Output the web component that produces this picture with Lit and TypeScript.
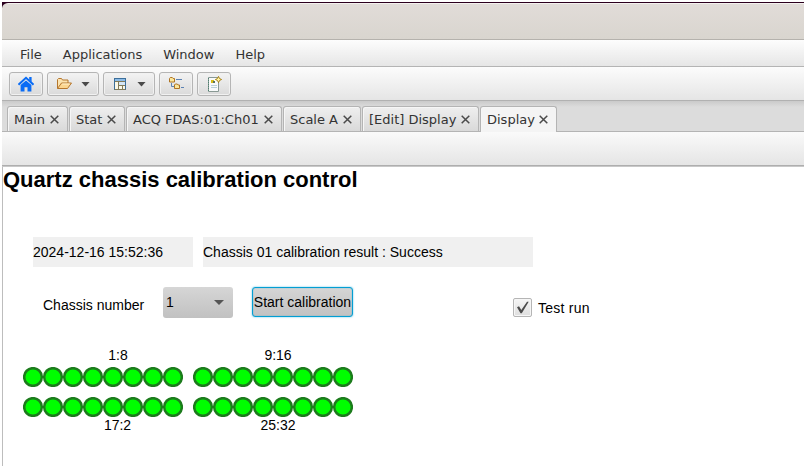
import { LitElement, html, css, svg } from "lit";
import { customElement, property } from "lit/decorators.js";
import { styleMap } from "lit/directives/style-map.js";
import { classMap } from "lit/directives/class-map.js";

const homeIcon = html`<svg width="16" height="16" viewBox="0 0 16 16">
  <path fill="#0a6cf5" d="M8 4.400 2.600 9v6.400h3.900v-4.200h3v4.200h3.900V9z"/>
  <path fill="none" stroke="#0a6cf5" stroke-width="1.900" d="M.5 8.700 8 1.700l7.500 7"/>
  <path fill="#0a6cf5" d="M11.200 1h2.400v5l-2.400-2.200z"/>
</svg>`;

const folderIcon = html`<svg width="16" height="16" viewBox="0 0 16 16">
  <path fill="#fbe3b0" stroke="#b5762d" d="M1.500 12.500v-9l1-1h3l1 1.500h5.500v3"/>
  <path fill="#fbd58f" stroke="#b5762d" stroke-linejoin="round" d="M1.500 12.500 5.500 7h10l-4 5.500z"/>
  <path fill="none" stroke="#fff1cf" d="M6.200 8h7.500"/>
</svg>`;

const layoutIcon = html`<svg width="16" height="16" viewBox="0 0 16 16">
  <rect x="2.500" y="2.500" width="11" height="11" fill="#fbf8e8" stroke="#3c6f9a"/>
  <rect x="7" y="6" width="6" height="3" fill="#d5e6f5"/>
  <rect x="3" y="3" width="10" height="2" fill="#8bbbe8"/>
  <path fill="none" stroke="#827b58" d="M3 5.500h10M6.500 5.500v8M6.500 9.500h7M10.500 9.500v4M2.500 13.500h11"/>
  <path fill="none" stroke="#3c6f9a" d="M2.500 13V2.500h11V13"/>
</svg>`;

const treeIcon = html`<svg width="16" height="16" viewBox="0 0 16 16">
  <path fill="none" stroke="#5c83b4" d="M8 3.500h6M13 11.500h3M3.500 7v3.500H6"/>
  <path fill="#fbe79c" stroke="#ae7424" d="M1.500 6V2.500l.8-1h2l.8 1h1.400V6zM6.500 12.500V9l.8-1h2l.8 1h1.400v3.500z"/>
</svg>`;

const newIcon = html`<svg width="16" height="16" viewBox="0 0 16 16">
  <path fill="#f8fafa" stroke="#899994" d="M2.500 1.500h10v14h-10z"/>
  <path fill="none" stroke="#4e8171" stroke-dasharray="1 1" d="M2.500 2v13"/>
  <path fill="none" stroke="#b9d0da" d="M5 9.500h6M5 11.500h6"/>
  <path fill="#d8bd16" d="M5 4h3v3H5z"/><path fill="#57705b" d="M7 5h2v2H7z"/>
  <path fill="#fff5a2" stroke="#a37a0b" stroke-width=".9" d="m12.500.4 1 2.100 2.100 1-2.100 1-1 2.100-1-2.100-2.100-1 2.100-1z"/>
</svg>`;

@customElement("menu-bar")
class MenuBar extends LitElement {
  static styles = css`
    :host { display: flex; box-sizing: border-box; height: 27px; padding-left: 18px; gap: 21px;
      background: linear-gradient(#fdfdfd, #e6e6e6); border-bottom: 1px solid #b4b4b4;
      font: 13px/30px "DejaVu Sans", sans-serif; color: #333; }
  `;
  render() {
    return ["File", "Applications", "Window", "Help"].map((m) => html`<span>${m}</span>`);
  }
}

@customElement("tool-bar")
class ToolBar extends LitElement {
  static styles = css`
    :host { display: flex; box-sizing: border-box; height: 34px; padding: 5px 0 0 7px; gap: 4px;
      background: linear-gradient(#fcfcfc, #e5e5e5); border-bottom: 1px solid #b1b1b1; }
    .btn { display: flex; align-items: center; box-sizing: border-box; width: 34px; height: 24px;
      padding-left: 8px; border: 1px solid #b5b5b5; border-radius: 3px;
      background: linear-gradient(#f3f3f3, #dadada); box-shadow: inset 0 0 0 1px #f1f1f1; }
    .wide { width: 52px; gap: 9px; }
    .arrow { width: 9px; height: 5px; background: #4a4a4a; clip-path: polygon(0 0, 100% 0, 50% 100%); }
  `;
  render() {
    const items = [
      { icon: homeIcon, menu: false }, { icon: folderIcon, menu: true },
      { icon: layoutIcon, menu: true }, { icon: treeIcon, menu: false }, { icon: newIcon, menu: false },
    ];
    return items.map((i) => html`<div class=${classMap({ btn: true, wide: i.menu })}>
      ${i.icon}${i.menu ? html`<span class="arrow"></span>` : ""}</div>`);
  }
}

@customElement("tab-strip")
class TabStrip extends LitElement {
  static styles = css`
    :host { display: flex; box-sizing: border-box; height: 31px; padding: 5px 0 0 5px; gap: 1px;
      background: linear-gradient(#cacaca, #dcdcdc 6px); border-bottom: 1px solid #b4b4b4;
      font: 13px/25px "DejaVu Sans", sans-serif; color: #333; }
    .tab { display: flex; align-items: center; justify-content: space-between; box-sizing: border-box;
      height: 25px; padding: 0 8px 0 6px; border: 1px solid #b4b4b4; border-bottom: 0;
      border-radius: 3px 3px 0 0; white-space: nowrap;
      background: linear-gradient(#efefef, #d9d9d9); box-shadow: inset 1px 1px #f6f6f6; }
    .active { height: 26px; padding-bottom: 1px; background: #f4f4f4; }
    svg { display: block; }
  `;
  render() {
    const tabs: [string, number][] = [["Main", 61], ["Stat", 56], ["ACQ FDAS:01:Ch01", 156],
      ["Scale A", 78], ["[Edit] Display", 117], ["Display", 77]];
    return tabs.map(([name, w], i) => html`<div class=${classMap({ tab: true, active: i === 5 })}
      style=${styleMap({ width: `${w}px` })}><span>${name}</span>
      <svg width="9.500" height="9" viewBox="0 0 9.500 9"><path d="M.7.7l7.600 7.600M8.300.7.7 8.300" stroke="#4a4a4a" stroke-width="1.500"/></svg>
    </div>`);
  }
}

@customElement("led-row")
class LedRow extends LitElement {
  @property({ type: Number }) count = 8;
  static styles = css`
    :host { display: flex; height: 20px; }
    svg { display: block; }
  `;
  render() {
    return html`<svg width=${this.count * 20} height="20">${Array.from({ length: this.count }, (_, i) =>
      svg`<circle cx=${i * 20 + 10} cy="10" r="8.850" fill="#00ff00" stroke="#1c7c1c" stroke-width="2.500"/>`)}</svg>`;
  }
}

@customElement("app-root")
class AppRoot extends LitElement {
  static styles = css`
    :host { display: block; box-sizing: border-box; width: 806px; height: 468px; padding: 2px; background: #fff; overflow: hidden; }
    .window { background: linear-gradient(#2c001e, #2c001e) 0 0 / 7px 7px no-repeat; }
    .title { box-sizing: border-box; height: 38px; border-top: 1px solid #2c001e;
      border-bottom: 1px solid #b5b2ad; border-radius: 6px 0 0 0;
      background: linear-gradient(#f4f1ef 0 1px, #e1dcd8 1px, #d9d5cf); background-clip: padding-box; }
    .sub { box-sizing: border-box; height: 35px; border-bottom: 1px solid #c8c8c8;
      background: linear-gradient(#fafafa, #e5e5e5 33px, #aeaeae 33px); }
    .canvas { box-sizing: border-box; height: 299px; border-left: 1px solid #bdbdbd; background: #fff;
      font: 14px/16px "Liberation Sans", Arial, sans-serif; color: #000; }
    h1 { margin: 0; height: 70px; font-size: 22px; line-height: 26px; white-space: nowrap; }
    .status { display: flex; gap: 10px; padding-left: 30px; line-height: 30px; }
    .field { background: #f0f0f0; height: 30px; width: 330px; }
    .date { width: 160px; }
    .controls { display: flex; height: 31px; padding: 20px 0 0 40px; }
    .label { width: 120px; line-height: 37px; }
    .combo { display: flex; align-items: center; justify-content: space-between; box-sizing: border-box;
      width: 70px; height: 31px; padding: 0 9px 0 3px; border-radius: 3px; line-height: 14px;
      background: linear-gradient(#d6d6d6, #c1c1c1); }
    .value { padding-bottom: 1px; }
    .arrow { width: 10px; height: 5px; background: #555; clip-path: polygon(0 0, 100% 0, 50% 100%); }
    .start { display: flex; justify-content: center; box-sizing: border-box; width: 101px; height: 30px;
      margin-left: 19px; border: 1px solid #039ed3; border-radius: 3px; line-height: 29px; white-space: nowrap;
      background: linear-gradient(#d5d5d5, #c2c2c2); box-shadow: 0 0 2px #5cc3e5, inset 0 0 1px #039ed3; }
    .check { display: flex; align-items: center; margin: 11px 0 0 160px; height: 19px; gap: 6px; white-space: nowrap; }
    .check span { letter-spacing: .25px; }
    .box { box-sizing: border-box; width: 19px; height: 19px; border: 1px solid #b5b5b5; border-radius: 2px;
      background: linear-gradient(#f5f5f5, #dedede); box-shadow: inset 0 0 0 1px #f6f6f6; }
    .box svg { display: block; }
    .banks { display: grid; grid-template-columns: 160px 160px; column-gap: 10px;
      padding: 29px 0 0 20px; text-align: center; }
    .bank { display: flex; flex-direction: column; }
    .top { height: 20px; padding-left: 10px; }
    .bank led-row + led-row { margin-top: 10px; }
    .bottom { padding-left: 10px; }
    .first .top { padding-left: 30px; }
    .first .bottom { padding-left: 29px; }
  `;
  render() {
    return html`
      <div class="window">
        <div class="title"></div>
        <menu-bar></menu-bar>
        <tool-bar></tool-bar>
        <tab-strip></tab-strip>
        <div class="sub"></div>
        <div class="canvas">
          <h1>Quartz chassis calibration control</h1>
          <div class="status">
            <div class="field date">2024-12-16 15:52:36</div>
            <div class="field">Chassis 01 calibration result : Success</div>
          </div>
          <div class="controls">
            <div class="label">Chassis number</div>
            <div class="combo"><span class="value">1</span><span class="arrow"></span></div>
            <div class="start">Start calibration</div>
            <div class="check">
              <div class="box"><svg width="17" height="17" viewBox="0 0 17 17">
                <path d="M3 8.200 5 7.200 7.300 11 13 2.800h1.700L7.800 14.200H6.500z" fill="#4a4a4a"/></svg></div>
              <span>Test run</span>
            </div>
          </div>
          <div class="banks">
            <div class="bank first">
              <div class="top">1:8</div>
              <led-row></led-row><led-row></led-row>
              <div class="bottom">17:2</div>
            </div>
            <div class="bank">
              <div class="top">9:16</div>
              <led-row></led-row><led-row></led-row>
              <div class="bottom">25:32</div>
            </div>
          </div>
        </div>
      </div>`;
  }
}
